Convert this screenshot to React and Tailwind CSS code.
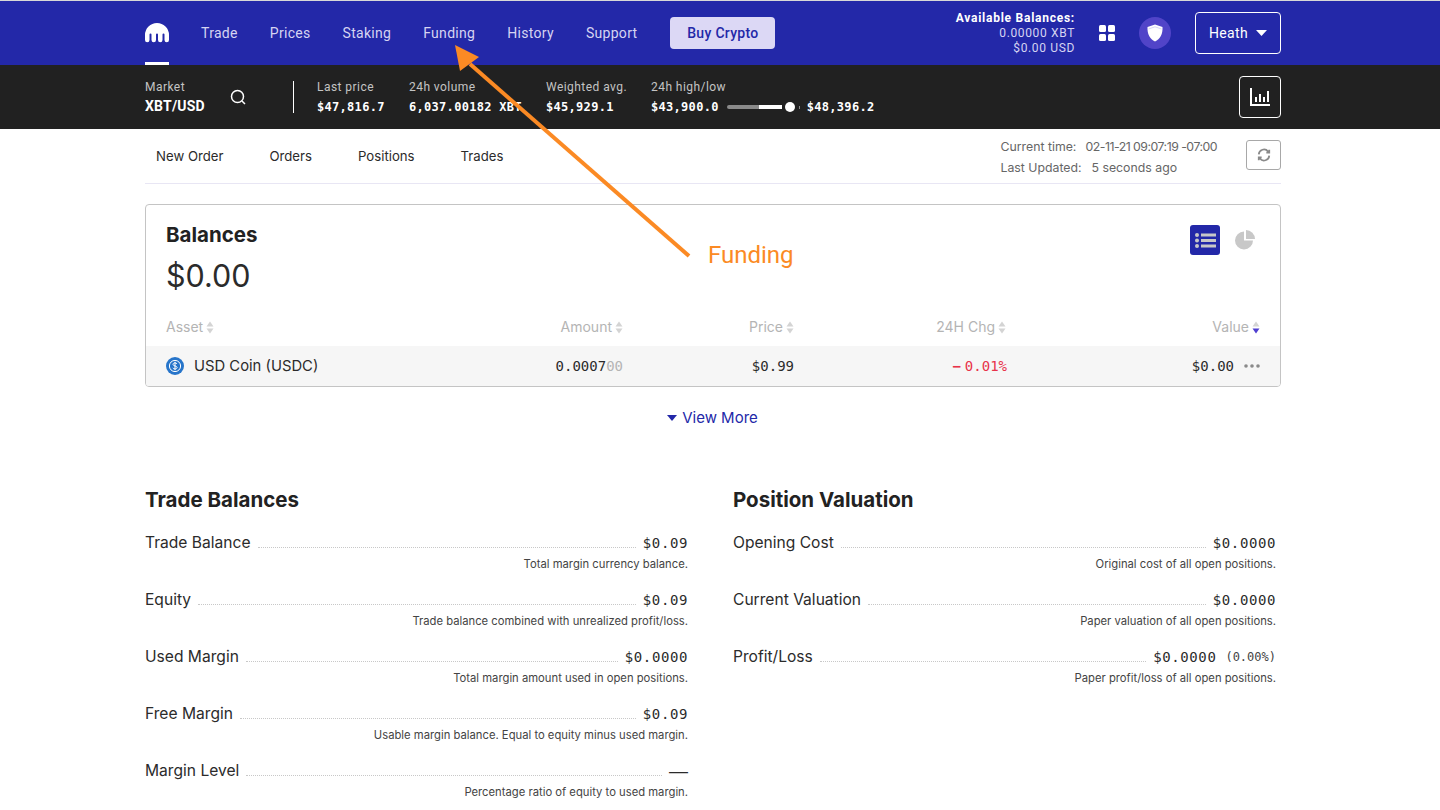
import React from "react";

const plex = "font-['Roboto',sans-serif]";
const mono = "font-['DejaVu_Sans_Mono',monospace]";

function Sort({ active }) {
  return (
    <svg width="8" height="13" viewBox="0 0 8 13" className="ml-[3px] mt-[2px]">
      <path d="M4 0.500 L7.500 5.500 H0.500Z" fill="#d4d4d4" />
      <path d="M0.500 7.500 H7.500 L4 12.500Z" fill={active ? "#4f3fd0" : "#d4d4d4"} />
    </svg>
  );
}

function Stat({ label, value, className = "" }) {
  return (
    <div className={`flex flex-col ${className}`}>
      <span className={`${plex} text-[12px] leading-[16px] tracking-[0.45px] text-[#c4c4c4]`}>{label}</span>
      <span className={`${mono} mt-[4px] text-[12px] leading-[17px] font-bold text-white tracking-[0.3px]`}>{value}</span>
    </div>
  );
}

function Row({ label, value, extra, note, dash }) {
  return (
    <div className="h-[57px]">
      <div className="flex items-end h-[22px]">
        <span className="text-[15.6px] leading-[22px] text-[#2b2b2b]">{label}</span>
        <span className="flex-1 mx-[7px] mb-[6px] border-b border-dotted border-[#c8c8c8]" />
        {dash ? (
          <span className="font-['Liberation_Sans',sans-serif] text-[19px] leading-[22px] text-[#2b2b2b]">—</span>
        ) : (
          <span className={`${mono} text-[14px] leading-[22px] tracking-[0.6px] text-[#2b2b2b]`}>{value}</span>
        )}
        {extra && <span className={`${mono} ml-[9px] text-[12px] leading-[22px] text-[#444]`}>{extra}</span>}
      </div>
      <div className="mt-[2px] text-right text-[11.25px] leading-[16px] text-[#444]">{note}</div>
    </div>
  );
}

export default function App() {
  return (
    <div className="relative w-[1440px] h-[810px] overflow-hidden bg-white font-['Inter',sans-serif]">
      <div className="h-px bg-[#d8d8d8]" />
      <header className="h-[64px] bg-[#2328a8] pl-[145px]">
        <div className="w-[1136px] h-full flex items-center">
          <div className="relative h-full w-[25px] flex items-center">
            <svg width="24" height="20" viewBox="0 0 24 20" className="-mt-[1px]">
              <path fill="#fff" d="M0 12A12 12 0 0 1 24 12V17a2.250 2.250 0 0 1-4.500 0V11.500a1 1 0 0 0-2 0V17a2.250 2.250 0 0 1-4.500 0V11.500a1 1 0 0 0-2 0V17a2.250 2.250 0 0 1-4.500 0V11.500a1 1 0 0 0-2 0V17a2.250 2.250 0 0 1-4.500 0Z" />
            </svg>
            <div className="absolute bottom-0 left-0 w-[24px] h-[3px] bg-white" />
          </div>
          <nav className={`${plex} flex items-center ml-[31px] gap-[32px] text-[14px] tracking-[0.3px] text-[#d6d4f2]`}>
            <span>Trade</span><span>Prices</span><span>Staking</span><span>Funding</span><span>History</span><span>Support</span>
          </nav>
          <button className={`${plex} ml-[33px] w-[105px] h-[32px] rounded-[4px] bg-[#dcd8f5] text-[#2328a8] text-[14px] font-medium tracking-[0.3px]`}>Buy Crypto</button>
          <div className={`${plex} ml-auto text-right text-[12px] leading-[15px] tracking-[0.65px] text-[#d6d4f2]`}>
            <div className="font-bold text-white tracking-[0.75px]">Available Balances:</div>
            <div>0.00000 XBT</div>
            <div>$0.00 USD</div>
          </div>
          <svg width="16" height="16" viewBox="0 0 16 16" className="ml-[24px]" fill="#fff">
            <rect x="0" y="0" width="7" height="7" rx="1.500" /><rect x="9" y="0" width="7" height="7" rx="1.500" />
            <rect x="0" y="9" width="7" height="7" rx="1.500" /><rect x="9" y="9" width="7" height="7" rx="1.500" />
          </svg>
          <div className="ml-[24px] w-[32px] h-[32px] rounded-full bg-[#5144c8] flex items-center justify-center">
            <svg width="16" height="18" viewBox="0 0 16 18">
              <path fill="#fff" d="M8 0.500 L15.500 3 C16 10 13 15 8 17.500 C3 15 0 10 0.500 3Z" />
              <path d="M1.500 5 L8 2.800 L14.500 5" fill="none" stroke="#c9c4f0" strokeWidth="0.700" />
            </svg>
          </div>
          <button className={`${plex} ml-[24px] w-[86px] h-[42px] rounded-[4px] border border-white text-white flex items-center justify-center gap-[8px] text-[14px] tracking-[0.3px]`}>
            Heath
            <svg width="11" height="6" viewBox="0 0 11 6"><path fill="#fff" d="M0 0H11L5.500 6Z" /></svg>
          </button>
        </div>
      </header>
      <div className="h-[64px] bg-[#212121] pl-[145px]">
        <div className="w-[1136px] h-full flex items-center">
          <div className="flex flex-col w-[80px]">
            <span className={`${plex} text-[12px] leading-[16px] tracking-[0.45px] text-[#c4c4c4]`}>Market</span>
            <span className={`${plex} mt-[2px] text-[14px] leading-[18px] font-bold text-white tracking-[0.2px]`}>XBT/USD</span>
          </div>
          <svg width="18" height="18" viewBox="0 0 18 18" fill="none" stroke="#fff" strokeWidth="1.500" className="ml-[4px]">
            <circle cx="8.500" cy="8.500" r="6" /><path d="M13 13l3 3" />
          </svg>
          <div className="ml-[46px] w-px h-[32px] bg-white" />
          <Stat label="Last price" value="$47,816.7" className="ml-[23px] w-[92px]" />
          <Stat label="24h volume" value="6,037.00182 XBT" className="w-[137px]" />
          <Stat label="Weighted avg." value="$45,929.1" className="w-[105px]" />
          <div className="flex flex-col">
            <span className={`${plex} text-[12px] leading-[16px] tracking-[0.45px] text-[#c4c4c4]`}>24h high/low</span>
            <div className="flex items-center mt-[4px]">
              <span className={`${mono} text-[12px] leading-[17px] font-bold text-white tracking-[0.3px]`}>$43,900.0</span>
              <div className="ml-[8px] w-[73px] flex items-center">
                <div className="w-[32px] h-[4px] bg-[#8a8a8a] rounded-l-full" />
                <div className="w-[23px] h-[4px] bg-white" />
                <div className="ml-[3px] w-[10px] h-[10px] rounded-full bg-white" />
                <div className="ml-[4px] w-[1px] h-[3px] bg-[#8a8a8a]" />
              </div>
              <span className={`${mono} ml-[7px] text-[12px] leading-[17px] font-bold text-white tracking-[0.3px]`}>$48,396.2</span>
            </div>
          </div>
          <div className="ml-auto w-[42px] h-[42px] rounded-[4px] border border-white flex items-center justify-center">
            <svg width="20" height="18" viewBox="0 0 20 18" fill="#fff">
              <rect x="0" y="0" width="2" height="18" /><rect x="0" y="16" width="20" height="2" />
              <rect x="5" y="9" width="2" height="5" /><rect x="9" y="6" width="2" height="8" />
              <rect x="13" y="9" width="2" height="5" /><rect x="17" y="3" width="2" height="11" />
            </svg>
          </div>
        </div>
      </div>
      <main className="w-[1136px] ml-[145px]">
        <div className="h-[55px] flex items-center border-b border-[#e8e6f4]">
          <div className="flex gap-[46px] ml-[11px] mt-[1px] text-[13.2px] text-[#2b2b2b]">
            <span>New Order</span><span>Orders</span><span>Positions</span><span>Trades</span>
          </div>
          <div className="ml-auto text-[12.3px] leading-[21px] text-[#666] mt-[1px]">
            <div className="flex"><span className="w-[85px]">Current time:</span><span className="tracking-[-0.5px]">02-11-21 09:07:19 -07:00</span></div>
            <div className="flex"><span className="w-[91px]">Last Updated:</span><span>5 seconds ago</span></div>
          </div>
          <div className="ml-[29px] w-[35px] h-[30px] rounded-[3px] border border-[#a8a8a8] flex items-center justify-center -mt-[2px]">
            <svg width="14" height="14" viewBox="0 0 24 24" fill="none" stroke="#8a8a8a" strokeWidth="3">
              <path d="M3 11a9 9 0 0 1 16-5l2 2M21 3v5h-5M21 13a9 9 0 0 1-16 5l-2-2M3 21v-5h5" />
            </svg>
          </div>
        </div>
        <section className="mt-[20px] h-[183px] rounded-[4px] border border-[#c4c4c4] flex flex-col overflow-hidden">
          <div className="h-[100px] px-[20px] relative">
            <h2 className="pt-[17px] text-[20.500px] leading-[26px] font-bold text-[#222]">Balances</h2>
            <div className="mt-[9px] text-[30.500px] leading-[38px] text-[#2b2b2b]">$0.00</div>
            <div className="absolute right-[60px] top-[20px] w-[30px] h-[30px] rounded-[3px] bg-[#2328a8] flex items-center justify-center">
              <svg width="21" height="15" viewBox="0 0 21 15" fill="#c8c8c8">
                <circle cx="2" cy="2" r="2" /><circle cx="2" cy="7.500" r="2" /><circle cx="2" cy="13" r="2" />
                <rect x="6" y="0.500" width="15" height="3" /><rect x="6" y="6" width="15" height="3" /><rect x="6" y="11.500" width="15" height="3" />
              </svg>
            </div>
            <div className="absolute right-[25px] top-[25px]">
              <svg width="20" height="20" viewBox="0 0 20 20" fill="#c8c8c8">
                <path d="M9 1.500V10.500H18A9 9 0 1 1 9 1.500Z" /><path d="M11 0A9 9 0 0 1 20 9H11Z" />
              </svg>
            </div>
          </div>
          <div className="h-[41px] flex items-center pr-[20px] pl-[20px] text-[14px] text-[#b4b4b4] pt-[1px]">
            <div className="flex items-center flex-1">Asset<Sort /></div>
            <div className="flex items-center justify-end w-[200px]">Amount<Sort /></div>
            <div className="flex items-center justify-end w-[171px]">Price<Sort /></div>
            <div className="flex items-center justify-end w-[212px]">24H Chg<Sort /></div>
            <div className="flex items-center justify-end w-[254px]">Value<Sort active /></div>
          </div>
          <div className="h-[40px] bg-[#f6f6f6] flex items-center pl-[20px] pr-[20px]">
            <svg width="18" height="18" viewBox="0 0 18 18">
              <circle cx="9" cy="9" r="9" fill="#2775ca" />
              <circle cx="9" cy="9" r="5.600" fill="none" stroke="#fff" strokeWidth="1" />
              <path d="M11 7c-.4-.8-1.100-1.100-2-1.100-1.200 0-2 .6-2 1.500 0 2 4.100 1.100 4.100 3.100 0 .9-.9 1.500-2.100 1.500-1 0-1.800-.4-2.100-1.200M9 4.800v8.400" fill="none" stroke="#fff" strokeWidth="1" />
            </svg>
            <span className="ml-[10px] text-[14.800px] text-[#2b2b2b]">USD Coin (USDC)</span>
            <span className={`${mono} ml-auto text-right text-[14px] text-[#2b2b2b]`}>0.0007<span className="text-[#b4b4b4]">00</span></span>
            <span className={`${mono} w-[171px] text-right text-[14px] text-[#2b2b2b]`}>$0.99</span>
            <span className={`${mono} w-[213px] text-right text-[14px] text-[#e8334a]`}><span className="font-bold mr-[4px]">−</span>0.01%</span>
            <span className={`${mono} w-[227px] text-right text-[14px] text-[#2b2b2b]`}>$0.00</span>
            <svg width="16" height="4" viewBox="0 0 16 4" fill="#8a8a8a" className="ml-[10px]">
              <circle cx="2" cy="2" r="1.800" /><circle cx="8" cy="2" r="1.800" /><circle cx="14" cy="2" r="1.800" />
            </svg>
          </div>
        </section>
        <div className="mt-[21px] -ml-[1px] flex items-center justify-center gap-[5px] text-[#2328a8] text-[15px] leading-[20px]">
          <svg width="10" height="6" viewBox="0 0 10 6"><path fill="#2328a8" d="M0 0H10L5 6Z" /></svg>
          View More
        </div>
        <div className="mt-[59px] flex">
          <div className="w-[543px]">
            <h3 className="text-[20.500px] leading-[26px] font-bold text-[#222]">Trade Balances</h3>
            <div className="mt-[19px]">
              <Row label="Trade Balance" value="$0.09" note="Total margin currency balance." />
              <Row label="Equity" value="$0.09" note="Trade balance combined with unrealized profit/loss." />
              <Row label="Used Margin" value="$0.0000" note="Total margin amount used in open positions." />
              <Row label="Free Margin" value="$0.09" note="Usable margin balance. Equal to equity minus used margin." />
              <Row label="Margin Level" dash note="Percentage ratio of equity to used margin." />
            </div>
          </div>
          <div className="w-[543px] ml-[45px]">
            <h3 className="text-[20.500px] leading-[26px] font-bold text-[#222]">Position Valuation</h3>
            <div className="mt-[19px]">
              <Row label="Opening Cost" value="$0.0000" note="Original cost of all open positions." />
              <Row label="Current Valuation" value="$0.0000" note="Paper valuation of all open positions." />
              <Row label="Profit/Loss" value="$0.0000" extra="(0.00%)" note="Paper profit/loss of all open positions." />
            </div>
          </div>
        </div>
      </main>
      <svg className="absolute inset-0 pointer-events-none" width="1440" height="810" viewBox="0 0 1440 810">
        <path d="M689 256 L470 64" stroke="#fb8a24" strokeWidth="4" fill="none" />
        <path d="M455 45 L479 57 L460 71Z" fill="#fb8a24" />
      </svg>
      <span className="absolute left-[708px] top-[240px] text-[24px] leading-[30px] text-[#fb8a24] font-['Roboto',sans-serif]">Funding</span>
    </div>
  );
}
